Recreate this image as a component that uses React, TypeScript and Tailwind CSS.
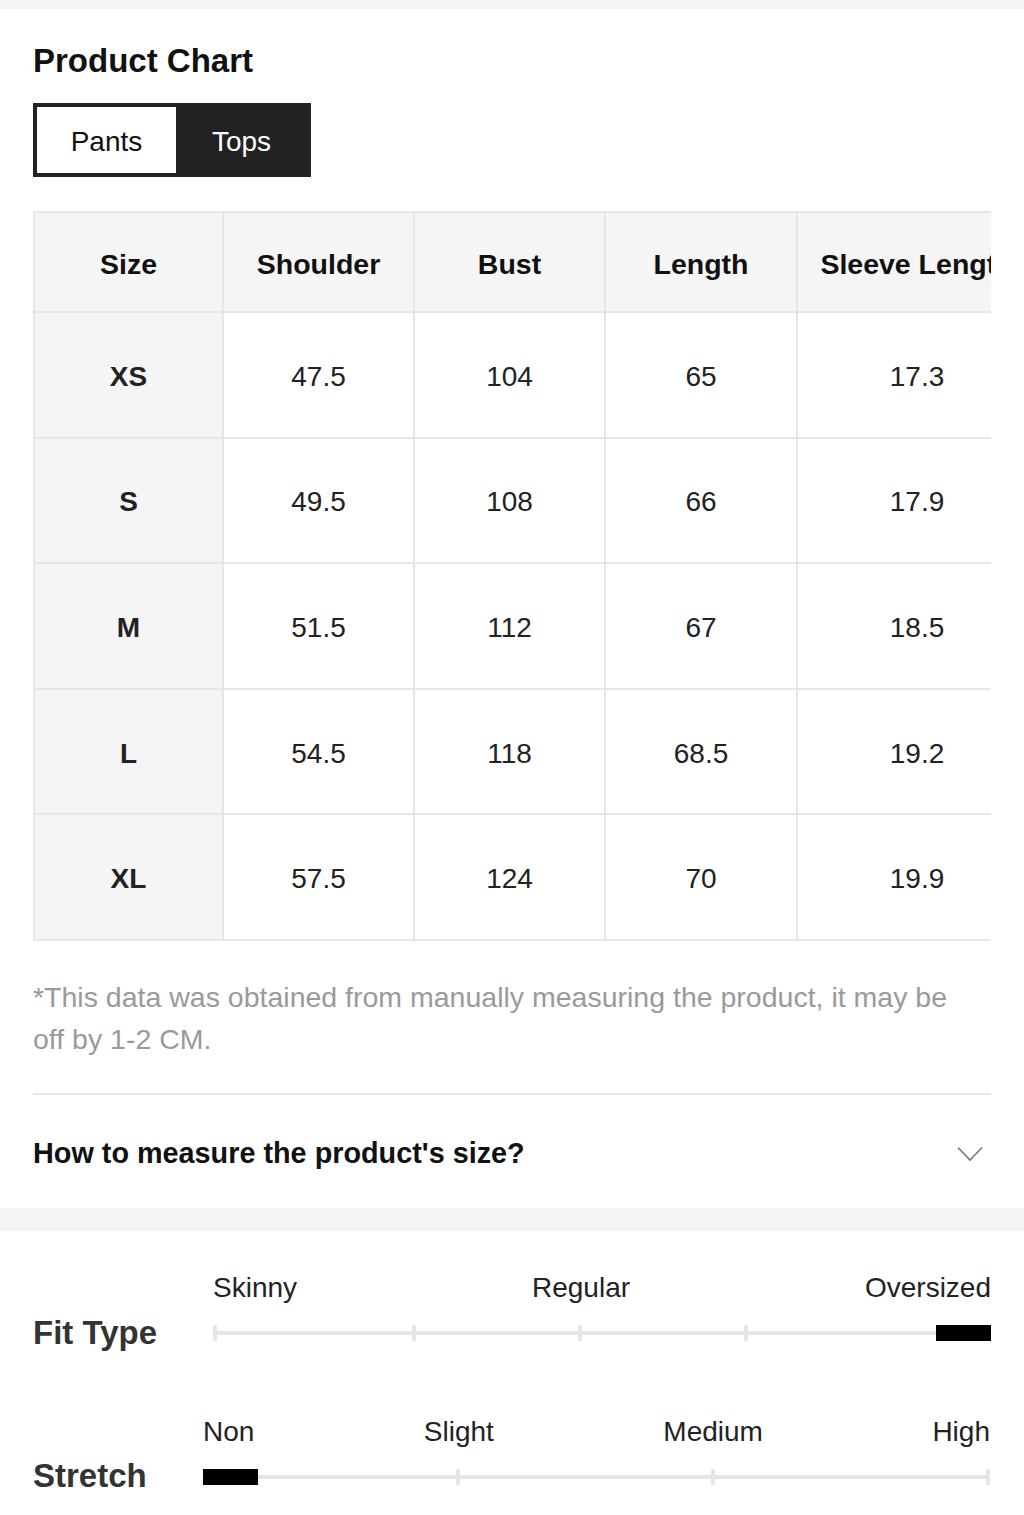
import React from 'react'

const columns = [
  { label: 'Size', width: 'w-[189px]' },
  { label: 'Shoulder', width: 'w-[191px]' },
  { label: 'Bust', width: 'w-[191px]' },
  { label: 'Length', width: 'w-[192px]' },
  { label: 'Sleeve Length', width: 'w-[240px]' },
]

const rows = [
  ['XS', '47.5', '104', '65', '17.3'],
  ['S', '49.5', '108', '66', '17.9'],
  ['M', '51.5', '112', '67', '18.5'],
  ['L', '54.5', '118', '68.5', '19.2'],
  ['XL', '57.5', '124', '70', '19.9'],
]

function SizeTable() {
  return (
    <div className="w-[958px] overflow-hidden">
      <div className="w-max border-l-2 border-t-2 border-[#e6e6e6]">
        <div className="flex h-[100px]">
          {columns.map(c => (
            <div
              key={c.label}
              className={`${c.width} shrink-0 flex items-center justify-center whitespace-nowrap border-r-2 border-b-2 border-[#e6e6e6] bg-[#f5f5f5] pt-[4px] text-[28.5px] font-bold text-[#111]`}
            >
              {c.label}
            </div>
          ))}
        </div>
        {rows.map(r => (
          <div key={r[0]} className="flex h-[125.6px]">
            {r.map((v, i) => (
              <div
                key={i}
                className={`${columns[i].width} shrink-0 flex items-center justify-center border-r-2 border-b-2 border-[#e6e6e6] pt-[4px] text-[28px] text-[#222] ${
                  i === 0 ? 'bg-[#f5f5f5] font-bold text-[#111]' : 'bg-white'
                }`}
              >
                {v}
              </div>
            ))}
          </div>
        ))}
      </div>
    </div>
  )
}

function Tick({ left }: { left: number }) {
  return <div className="absolute top-[1px] h-[16px] w-[4px] bg-[#e5e5e5]" style={{ left }} />
}

export default function App() {
  return (
    <div className="w-[1024px] bg-white font-['Liberation_Sans',Arial,sans-serif] text-[#111]">
      <div className="h-[9px] bg-[#f4f4f4]" />

      <div className="px-[33px] pt-[32px]">
        <h2 className="text-[33px] font-bold leading-[40px]">Product Chart</h2>

        <div className="mt-[22px] flex w-[278px] border-4 border-[#222] bg-[#222]">
          <button className="flex h-[66px] w-[139px] items-center justify-center bg-white pt-[4px] text-[28px] text-[#111]">
            Pants
          </button>
          <button className="flex h-[66px] w-[131px] items-center justify-center pt-[4px] text-[28px] text-white">
            Tops
          </button>
        </div>

        <div className="mt-[34px]">
          <SizeTable />
        </div>

        <p className="mt-[35px] w-[940px] text-[28.5px] leading-[42px] text-[#9a9a9a]">
          *This data was obtained from manually measuring the product, it may be off by 1-2 CM.
        </p>

        <div className="mt-[33px] h-[2px] w-[958px] bg-[#e6e6e6]" />

        <div className="flex h-[113px] w-[958px] items-center justify-between pt-[5px]">
          <span className="text-[28.8px] font-bold text-[#111]">How to measure the product's size?</span>
          <svg width="26" height="16" viewBox="0 0 26 16" className="mr-[8px]">
            <polyline points="1,1.5 13,14 25,1.5" fill="none" stroke="#777" strokeWidth="1.6" />
          </svg>
        </div>
      </div>

      <div className="h-[23px] bg-[#f4f4f4]" />

      <div className="px-[33px] pt-[41px] pb-[22px]">
        {/* fit type */}
        <div className="flex">
          <div className="w-[180px] shrink-0 pt-[43px]">
            <span className="text-[33px] font-bold leading-[36px] text-[#333]">Fit Type</span>
          </div>
          <div className="w-[778px]">
            <div className="flex justify-between text-[28px] leading-[32px] text-[#222]">
              <span>Skinny</span>
              <span>Regular</span>
              <span>Oversized</span>
            </div>
            <div className="relative mt-[20px] h-[18px]">
              <div className="absolute left-0 right-0 top-[7px] h-[4px] bg-[#e5e5e5]" />
              <Tick left={0} />
              <Tick left={199} />
              <Tick left={365} />
              <Tick left={531} />
              <div className="absolute right-0 top-[1px] h-[16px] w-[55px] bg-black" />
            </div>
          </div>
        </div>

        {/* stretch */}
        <div className="mt-[65px] flex">
          <div className="w-[170px] shrink-0 pt-[42px]">
            <span className="text-[33px] font-bold leading-[36px] text-[#333]">Stretch</span>
          </div>
          <div className="w-[787px]">
            <div className="flex justify-between text-[28px] leading-[32px] text-[#222]">
              <span>Non</span>
              <span>Slight</span>
              <span>Medium</span>
              <span>High</span>
            </div>
            <div className="relative mt-[20px] h-[18px]">
              <div className="absolute left-0 right-0 top-[7px] h-[4px] bg-[#e5e5e5]" />
              <Tick left={253} />
              <Tick left={508} />
              <Tick left={783} />
              <div className="absolute left-0 top-[1px] h-[16px] w-[55px] bg-black" />
            </div>
          </div>
        </div>
      </div>
    </div>
  )
}
